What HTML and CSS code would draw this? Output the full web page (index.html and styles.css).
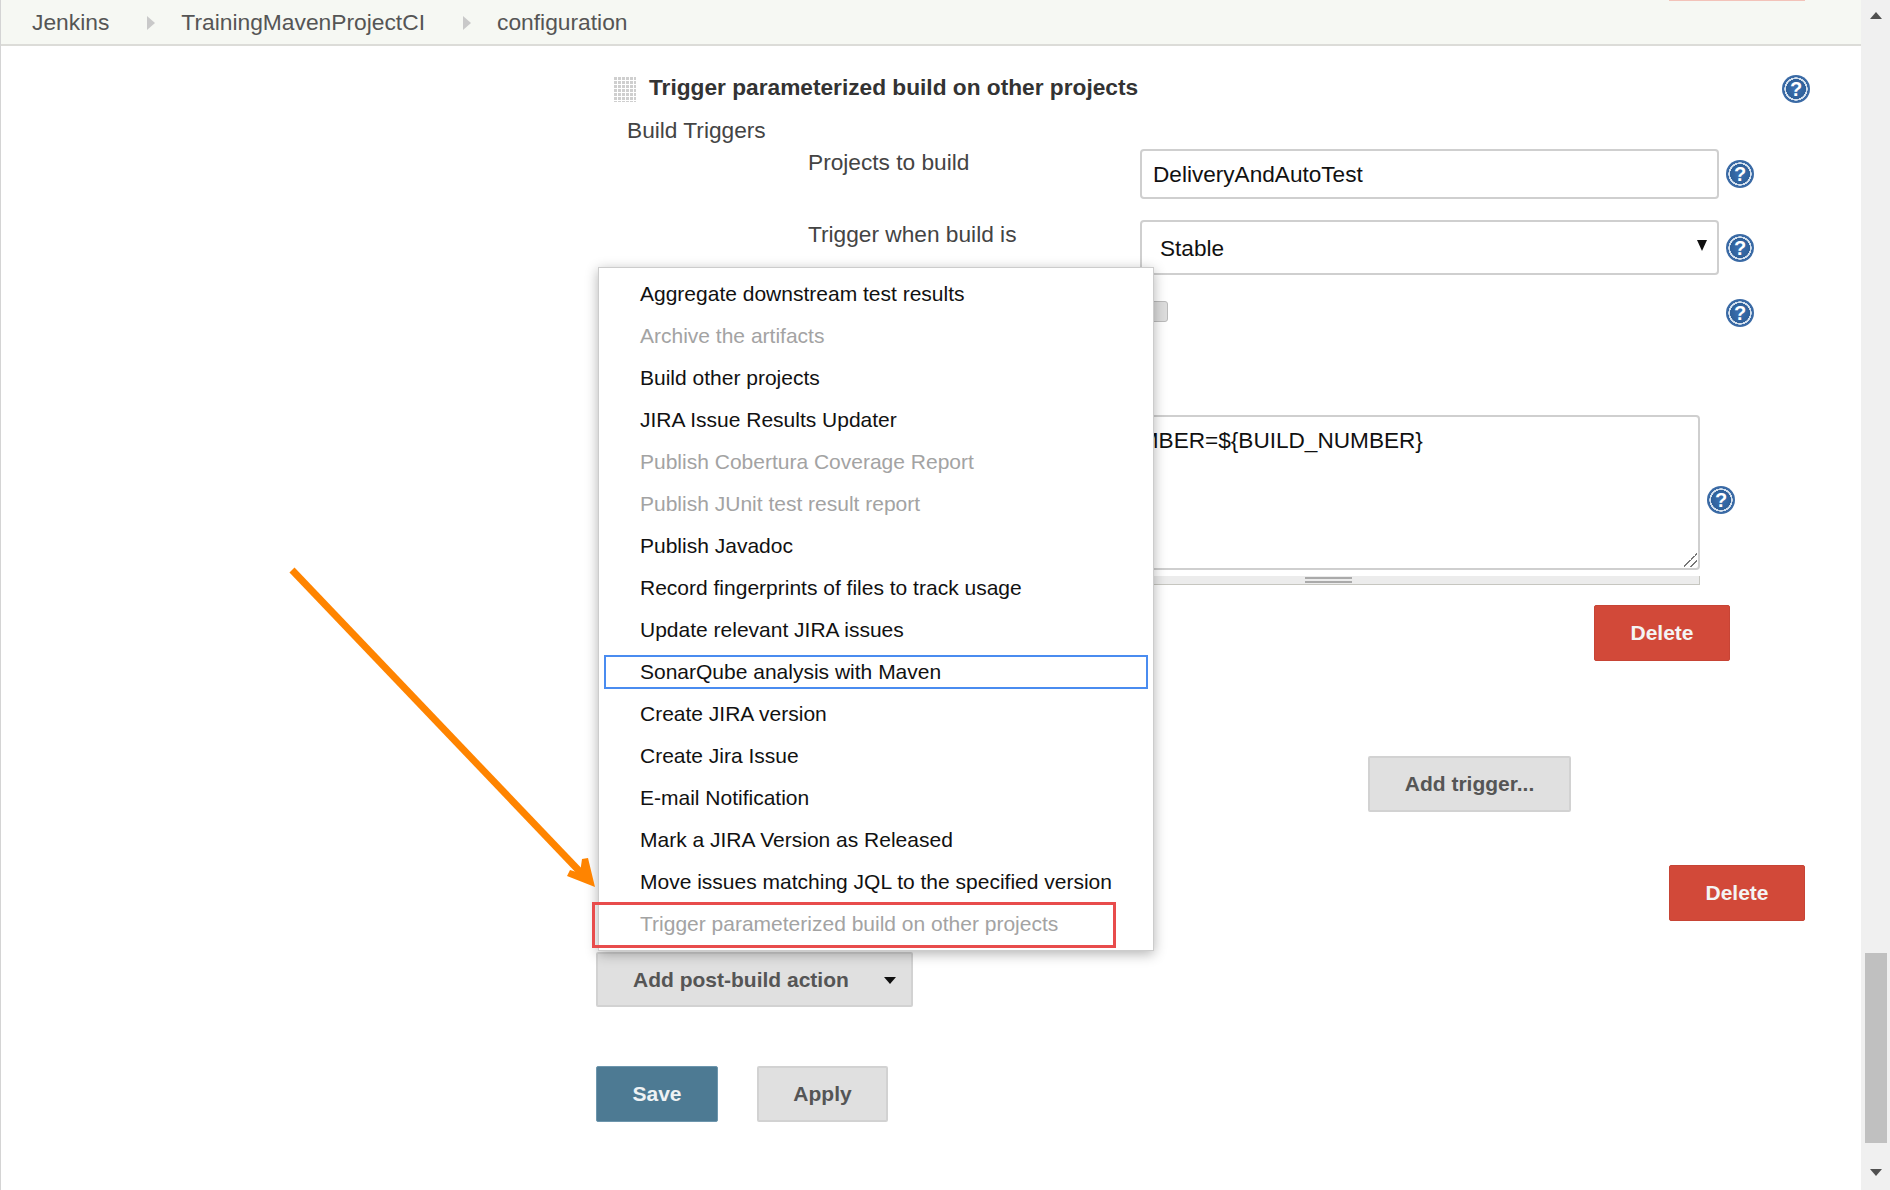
FILE: index.html
```html
<!DOCTYPE html>
<html lang="en">

<head>
  <meta charset="UTF-8">
  <title>TrainingMavenProjectCI configuration</title>
  <link rel="stylesheet" href="styles.css">
</head>

<body>
  <div class="page">
    <div class="content">
      <!-- Breadcrumbs -->
      <div class="header">
        <span class="crumb">Jenkins</span>
        <span class="crumb-arrow"></span>
        <span class="crumb">TrainingMavenProjectCI</span>
        <span class="crumb-arrow"></span>
        <span class="crumb">configuration</span>
        <span class="clipped-button"></span>
      </div>

      <div class="form">
        <!-- Trigger section -->
        <div class="section-head">
          <span class="handle"></span>
          <span class="section-title">Trigger parameterized build on other projects</span>
          <span class="help">?</span>
        </div>
        <div class="sub-title">Build Triggers</div>

        <div class="field field-first">
          <label>Projects to build</label>
          <input class="text-input" type="text" value="DeliveryAndAutoTest">
          <span class="help">?</span>
        </div>

        <div class="field field-select">
          <label>Trigger when build is</label>
          <div class="select-box">Stable<span class="select-arrow"></span></div>
          <span class="help">?</span>
        </div>

        <div class="field field-check">
          <span></span>
          <div><span class="checkbox"></span></div>
          <span class="help">?</span>
        </div>

        <!-- Predefined parameters -->
        <div class="params">
          <span></span>
          <div class="textarea-box">BUILD_NUMBER=${BUILD_NUMBER}<span class="resize-grip"></span></div>
          <span class="help">?</span>
        </div>
        <div class="params-bar"><span class="params-bar-grip"></span></div>

        <div class="delete-row delete-inner">
          <button class="btn btn-delete">Delete</button>
        </div>
        <button class="btn btn-plain btn-trigger">Add trigger...</button>
        <div class="delete-row delete-outer">
          <button class="btn btn-delete">Delete</button>
        </div>

        <button class="btn btn-plain btn-post">Add post-build action<span class="btn-caret"></span></button>

        <div class="actions">
          <button class="btn btn-save">Save</button>
          <button class="btn btn-plain btn-apply">Apply</button>
        </div>
      </div>
    </div>

    <div class="scrollbar">
      <span class="scroll-up"></span>
      <span class="scroll-thumb"></span>
      <span class="scroll-down"></span>
    </div>

    <!-- Post-build action menu -->
    <ul class="menu">
      <li>Aggregate downstream test results</li>
      <li class="off">Archive the artifacts</li>
      <li>Build other projects</li>
      <li>JIRA Issue Results Updater</li>
      <li class="off">Publish Cobertura Coverage Report</li>
      <li class="off">Publish JUnit test result report</li>
      <li>Publish Javadoc</li>
      <li>Record fingerprints of files to track usage</li>
      <li>Update relevant JIRA issues</li>
      <li class="focus">SonarQube analysis with Maven</li>
      <li>Create JIRA version</li>
      <li>Create Jira Issue</li>
      <li>E-mail Notification</li>
      <li>Mark a JIRA Version as Released</li>
      <li>Move issues matching JQL to the specified version</li>
      <li class="off">Trigger parameterized build on other projects</li>
    </ul>

    <!-- Annotations -->
    <div class="red-box"></div>
    <svg class="arrow" width="320" height="330" viewBox="0 0 320 330">
      <path d="M9 7 L302 314" stroke="#ff8400" stroke-width="7" fill="none" />
      <path d="M312 324 L284 313 L287 307 L297 310 L299 296 L305 295 Z" fill="#ff8400" />
    </svg>
  </div>
</body>

</html>
```
FILE: styles.css
```css
* {
  box-sizing: border-box;
}

body {
  margin: 0;
  font-family: 'Liberation Sans', Arial, sans-serif;
  color: #333;
  background: #fff;
}

.page {
  position: relative;
  display: flex;
  height: 1190px;
  overflow: hidden;
}

.content {
  flex: 1;
  border-left: 1px solid #d4d4d4;
}

/* Breadcrumbs */
.header {
  position: relative;
  display: flex;
  align-items: center;
  height: 46px;
  padding-left: 31px;
  background: #f6f8f3;
  border-bottom: 2px solid #dcdcd8;
  font-size: 22.8px;
  color: #555;
}

.crumb-arrow {
  width: 0;
  height: 0;
  margin: 2px 26px 0 38px;
  border-left: 8px solid #c9c9c9;
  border-top: 7px solid transparent;
  border-bottom: 7px solid transparent;
}

.clipped-button {
  position: absolute;
  top: 0;
  left: 1668px;
  width: 136px;
  height: 1px;
  background: #f3c3b9;
}

/* Form */
.form {
  width: 1214px;
  margin-left: 595px;
  font-size: 22.7px;
}

.section-head {
  display: flex;
  align-items: center;
  height: 30px;
  margin-top: 28px;
  padding-left: 17px;
}

.handle {
  width: 23px;
  height: 26px;
  margin-right: 13px;
  background-image:
    linear-gradient(#fff 0, #fff 1px, transparent 1px),
    linear-gradient(90deg, #fff 0, #fff 1px, transparent 1px);
  background-size: 4px 4px;
  background-color: #cfcfcf;
}

.section-title {
  margin-top: -4px;
  font-weight: 700;
}

.section-head .help {
  margin-left: auto;
  margin-right: 0;
}

.help {
  display: block;
  width: 28px;
  height: 28px;
  border-radius: 50%;
  background: radial-gradient(circle closest-side, #3b72b4 0, #2f6099 70%, #d5e1ee 72%, #d5e1ee 82%, #3a6aa5 84%);
  font-size: 20px;
  font-weight: 700;
  line-height: 28px;
  text-align: center;
  color: #fff;
}

.sub-title {
  height: 24px;
  margin-top: 14px;
  margin-left: 31px;
  line-height: 24px;
  color: #444;
}

.field {
  display: grid;
  grid-template-columns: 325px 579px 29px;
  column-gap: 7px;
  align-items: center;
  margin-left: 212px;
  color: #444;
}

.field label {
  align-self: start;
  line-height: 24px;
}

.field-first {
  margin-top: 7px;
}

.field-first label {
  padding-top: 1px;
}

.field-select {
  margin-top: 21px;
}

.field-select label {
  padding-top: 2px;
}

.field-check {
  margin-top: 24px;
}

.text-input {
  width: 100%;
  height: 50px;
  padding: 1px 11px 0;
  border: 2px solid #cfcfcf;
  border-radius: 4px;
  font-family: inherit;
  font-size: 22.6px;
  color: #111;
}

.select-box {
  position: relative;
  display: flex;
  align-items: center;
  height: 55px;
  padding: 2px 18px 0;
  border: 2px solid #cfcfcf;
  border-radius: 4px;
  font-size: 22.6px;
  color: #111;
}

.select-arrow {
  position: absolute;
  top: 18px;
  right: 10px;
  border-top: 11px solid #111;
  border-left: 5px solid transparent;
  border-right: 5px solid transparent;
}

.checkbox {
  display: block;
  width: 18px;
  height: 21px;
  margin-top: -4px;
  margin-left: 10px;
  background: #ddd;
  border: 1px solid #bbb;
  border-radius: 3px;
}

.params {
  display: grid;
  grid-template-columns: 196px 689px 29px;
  column-gap: 7px;
  margin-top: 88px;
  margin-left: 212px;
  color: #444;
}

.params .help {
  margin-top: 71px;
}

.textarea-box {
  position: relative;
  height: 155px;
  padding: 11px 8px 11px 15px;
  border: 2px solid #cfcfcf;
  border-radius: 4px;
  font-size: 22.6px;
  color: #111;
}

.resize-grip {
  position: absolute;
  right: 1px;
  bottom: 1px;
  width: 14px;
  height: 14px;
  background: linear-gradient(135deg, transparent 50%, #777 50%, #777 57%, transparent 57%, transparent 72%, #777 72%, #777 79%, transparent 79%);
}

.params-bar {
  position: relative;
  width: 680px;
  height: 9px;
  margin-top: 6px;
  margin-left: 424px;
  background: #ececec;
  border-bottom: 1px solid #c6c6c0;
  border-right: 1px solid #c6c6c0;
}

.params-bar-grip {
  position: absolute;
  top: 1px;
  left: 285px;
  width: 47px;
  height: 6px;
  border-top: 2px solid #aaa;
  border-bottom: 2px solid #aaa;
}

.btn {
  display: block;
  border-radius: 2px;
  font-family: inherit;
  font-size: 21px;
  font-weight: 700;
}

.btn-delete {
  width: 136px;
  height: 56px;
  background: #d24939;
  border: 1px solid #c74435;
  color: #f4f4f4;
}

.delete-row {
  display: flex;
  justify-content: flex-end;
}

.delete-inner {
  margin-top: 20px;
  margin-right: 80px;
}

.delete-outer {
  margin-top: 53px;
  margin-right: 5px;
}

.btn-plain {
  background: #e0e0e0;
  border: 2px solid #d2d2d2;
  color: #555;
}

.btn-trigger {
  width: 203px;
  height: 56px;
  margin-top: 95px;
  margin-left: 772px;
}

.btn-post {
  position: relative;
  width: 317px;
  height: 55px;
  margin-top: 31px;
  padding: 0 0 0 35px;
  text-align: left;
}

.btn-caret {
  position: absolute;
  top: 23px;
  right: 15px;
  border-top: 7px solid #111;
  border-left: 6px solid transparent;
  border-right: 6px solid transparent;
}

.actions {
  display: flex;
  gap: 39px;
  margin-top: 59px;
}

.btn-save {
  width: 122px;
  height: 56px;
  background: #4d7a93;
  border: 1px solid #6d96ad;
  color: #eef2f4;
}

.btn-apply {
  width: 131px;
  height: 56px;
}

/* Scrollbar */
.scrollbar {
  display: flex;
  flex-direction: column;
  align-items: center;
  width: 29px;
  background: #f0f0f0;
}

.scroll-up {
  margin-top: 12px;
  border-bottom: 7px solid #505050;
  border-left: 6px solid transparent;
  border-right: 6px solid transparent;
}

.scroll-thumb {
  width: 22px;
  height: 190px;
  margin-top: auto;
  margin-bottom: 26px;
  background: #c0c0c0;
}

.scroll-down {
  margin-bottom: 14px;
  border-top: 7px solid #505050;
  border-left: 6px solid transparent;
  border-right: 6px solid transparent;
}

/* Menu */
.menu {
  position: absolute;
  top: 267px;
  left: 598px;
  display: flex;
  flex-direction: column;
  gap: 8px;
  width: 556px;
  height: 684px;
  margin: 0;
  padding: 9px 5px 0;
  list-style: none;
  background: #fff;
  border: 1px solid #ccc;
  box-shadow: 0 3px 12px rgba(0, 0, 0, 0.3);
  font-size: 21px;
  color: #111;
}

.menu li {
  height: 34px;
  padding-left: 36px;
  line-height: 34px;
}

.menu .off {
  color: #a3a3a3;
}

.menu .focus {
  outline: 2px solid #4a8cf0;
  outline-offset: -2px;
}

/* Annotations */
.red-box {
  position: absolute;
  top: 902px;
  left: 592px;
  width: 524px;
  height: 46px;
  border: 3px solid #e84c4c;
}

.arrow {
  position: absolute;
  top: 563px;
  left: 283px;
}
```
